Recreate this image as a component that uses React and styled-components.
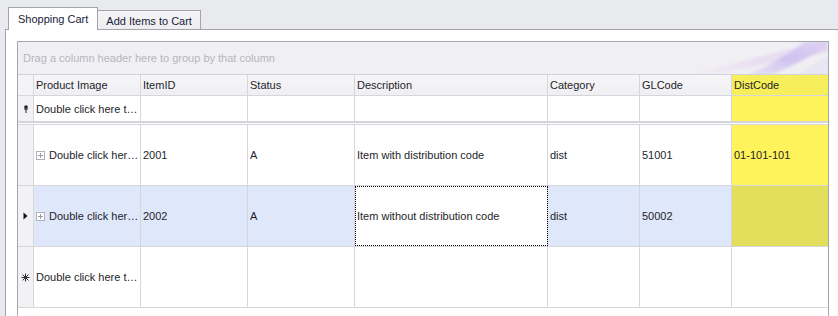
import React from 'react'
import styled, { createGlobalStyle } from 'styled-components'

const GlobalStyle = createGlobalStyle`
    body {
        margin: 0;
        background-color: #e9eaee;
        font-family: "Liberation Sans", Arial, sans-serif;
        font-size: 11px;
        color: #1e1e2a;
    }
`

const Page = styled.div`
    width: 838px;
    height: 316px;
    overflow: hidden;
`

const TabStrip = styled.div`
    display: flex;
    align-items: flex-end;
    height: 29px;
    padding-left: 8px;
`

const Tab = styled.div`
    position: relative;
    z-index: ${p => (p.active ? 2 : 1)};
    box-sizing: border-box;
    height: ${p => (p.active ? '23px' : '19px')};
    margin-bottom: ${p => (p.active ? '-1px' : '0')};
    padding: ${p => (p.active ? '5px 9px 0 9px' : '4px 8px 0 8px')};
    border: 1px solid #a3a3ab;
    border-bottom: ${p => (p.active ? 'none' : '0')};
    border-left: ${p => (p.active ? '1px solid #a3a3ab' : 'none')};
    background: ${p => (p.active ? '#ffffff' : 'linear-gradient(#f4f4f6, #eeeef1)')};
    color: #1a1a3a;
    white-space: nowrap;
`

const Panel = styled.div`
    margin-left: 5px;
    border-top: 1px solid #a3a3ab;
    border-left: 1px solid #a3a3ab;
    background-color: #ffffff;
    padding: 11px 0 0 11px;
    height: 300px;
`

const Grid = styled.div`
    width: 812px;
    height: 300px;
    box-sizing: border-box;
    border: 1px solid #a5a5ad;
    background-color: #ffffff;
`

const GroupPanel = styled.div`
    position: relative;
    height: 32px;
    display: flex;
    align-items: center;
    padding-left: 5px;
    border-bottom: 1px solid #d2d2d8;
    background-color: #f0f0f3;
    color: #b6b6be;
    overflow: hidden;
`

const Swoosh = styled.svg`
    position: absolute;
    right: 0;
    top: 0;
`

const Row = styled.div`
    display: grid;
    grid-template-columns: 16px 107px 107px 107px 193px 92px 92px 96px;
    height: ${p => p.h}px;
    border-bottom: 1px solid #d6d6db;
    background-color: ${p => (p.selected ? '#dee8fa' : '#ffffff')};
`

const Separator = styled.div`
    height: 1px;
    border-top: 1px solid #d0d0d6;
    border-bottom: 1px solid #d6d6db;
`

const Cell = styled.div`
    box-sizing: border-box;
    display: flex;
    align-items: center;
    padding-left: 2px;
    border-right: ${p => (p.last ? 'none' : '1px solid #d6d6db')};
    white-space: nowrap;
    overflow: hidden;
    background: ${p => p.bg || 'transparent'};
    ${p => p.focused && `
        background: #ffffff;
        outline: 1px dotted #000000;
        outline-offset: -1px;
    `}
`

const HeaderCell = styled(Cell)`
    background: ${p => p.bg || 'linear-gradient(#f6f6f8, #efeff2)'};
`

const Indicator = styled.div`
    box-sizing: border-box;
    display: flex;
    align-items: center;
    justify-content: center;
    border-right: 1px solid #d6d6db;
    background-color: ${p => (p.head ? '#f4f4f6' : '#f2f2f5')};
`

const PlusBox = styled.span`
    box-sizing: border-box;
    position: relative;
    width: 9px;
    height: 9px;
    margin-right: 4px;
    flex: none;
    border: 1px solid #b0b0b8;
    background: #ffffff;

    &::before, &::after {
        content: '';
        position: absolute;
        background: #9a9aa4;
    }
    &::before {
        left: 1px;
        top: 3px;
        width: 5px;
        height: 1px;
    }
    &::after {
        left: 3px;
        top: 1px;
        width: 1px;
        height: 5px;
    }
`

const YELLOW_HEAD = '#f6ee5b'
const YELLOW = '#fef35a'
const YELLOW_SEL = '#e3df5c'

const columns = ['Product Image', 'ItemID', 'Status', 'Description', 'Category', 'GLCode', 'DistCode']

const items = [
    { id: '2001', status: 'A', desc: 'Item with distribution code', cat: 'dist', gl: '51001', dist: '01-101-101' },
    { id: '2002', status: 'A', desc: 'Item without distribution code', cat: 'dist', gl: '50002', dist: '' },
]

const PinIcon = () => (
    <svg width="6" height="8" viewBox="0 0 6 8">
        <circle cx="3" cy="2" r="1.8" fill="#222" />
        <rect x="1" y="3.5" width="4" height="1" fill="#222" />
        <rect x="2.5" y="4" width="1" height="4" fill="#222" />
    </svg>
)

const ArrowIcon = () => (
    <svg width="5" height="8" viewBox="0 0 5 8">
        <path d="M0.5 0.5 L4.5 4 L0.5 7.5 Z" fill="#111" />
    </svg>
)

const NewRowIcon = () => (
    <svg width="9" height="9" viewBox="0 0 9 9" stroke="#333" strokeWidth="1">
        <path d="M4.5 0.5 V8.5 M0.5 4.5 H8.5 M1.6 1.6 L7.4 7.4 M7.4 1.6 L1.6 7.4" />
    </svg>
)

// soft lavender decoration on the right of the group panel
const SwooshArt = () => (
    <Swoosh width="150" height="32" viewBox="0 0 150 32">
        <defs>
            <filter id="soft" x="-10%" y="-30%" width="120%" height="160%">
                <feGaussianBlur stdDeviation="1.6" />
            </filter>
            <linearGradient id="fadeA" x1="0" y1="0" x2="1" y2="0">
                <stop offset="0" stopColor="#eddcf0" stopOpacity="0" />
                <stop offset="0.5" stopColor="#e8d8f0" stopOpacity="0.7" />
                <stop offset="1" stopColor="#e0d4f2" stopOpacity="0.9" />
            </linearGradient>
            <linearGradient id="fadeB" x1="0" y1="1" x2="1" y2="0">
                <stop offset="0" stopColor="#d2c2f0" stopOpacity="0.3" />
                <stop offset="0.5" stopColor="#c9b6ee" stopOpacity="0.75" />
                <stop offset="1" stopColor="#dcd0f4" stopOpacity="0.6" />
            </linearGradient>
        </defs>
        <g filter="url(#soft)">
            <path d="M0 34 C40 26 80 14 150 -2 L150 10 C100 20 60 28 30 34 Z" fill="url(#fadeA)" />
            <path d="M66 34 C92 24 112 12 128 -2 L150 -2 L150 4 C132 16 108 26 92 34 Z" fill="url(#fadeB)" />
            <path d="M118 34 C130 26 140 18 152 12 L152 34 Z" fill="#e4dcf4" opacity="0.5" />
        </g>
    </Swoosh>
)

export default function App() {
    return (
        <Page>
            <GlobalStyle />
            <TabStrip>
                <Tab active>Shopping Cart</Tab>
                <Tab>Add Items to Cart</Tab>
            </TabStrip>
            <Panel>
                <Grid>
                    <GroupPanel>
                        Drag a column header here to group by that column
                        <SwooshArt />
                    </GroupPanel>
                    <Row h={20}>
                        <Indicator head />
                        {columns.map((c, i) => (
                            <HeaderCell key={c} last={i === columns.length - 1} bg={c === 'DistCode' ? YELLOW_HEAD : undefined}>
                                {c}
                            </HeaderCell>
                        ))}
                    </Row>
                    <Row h={25}>
                        <Indicator><PinIcon /></Indicator>
                        <Cell>Double click here t…</Cell>
                        <Cell />
                        <Cell />
                        <Cell />
                        <Cell />
                        <Cell />
                        <Cell last bg={YELLOW} />
                    </Row>
                    <Separator />
                    {items.map((it, i) => {
                        const sel = i === 1
                        return (
                            <Row key={it.id} h={60} selected={sel}>
                                <Indicator>{sel && <ArrowIcon />}</Indicator>
                                <Cell><PlusBox />Double click her…</Cell>
                                <Cell>{it.id}</Cell>
                                <Cell>{it.status}</Cell>
                                <Cell focused={sel}>{it.desc}</Cell>
                                <Cell>{it.cat}</Cell>
                                <Cell>{it.gl}</Cell>
                                <Cell last bg={sel ? YELLOW_SEL : YELLOW}>{it.dist}</Cell>
                            </Row>
                        )
                    })}
                    <Row h={60}>
                        <Indicator><NewRowIcon /></Indicator>
                        <Cell>Double click here t…</Cell>
                        <Cell />
                        <Cell />
                        <Cell />
                        <Cell />
                        <Cell />
                        <Cell last />
                    </Row>
                </Grid>
            </Panel>
        </Page>
    )
}
